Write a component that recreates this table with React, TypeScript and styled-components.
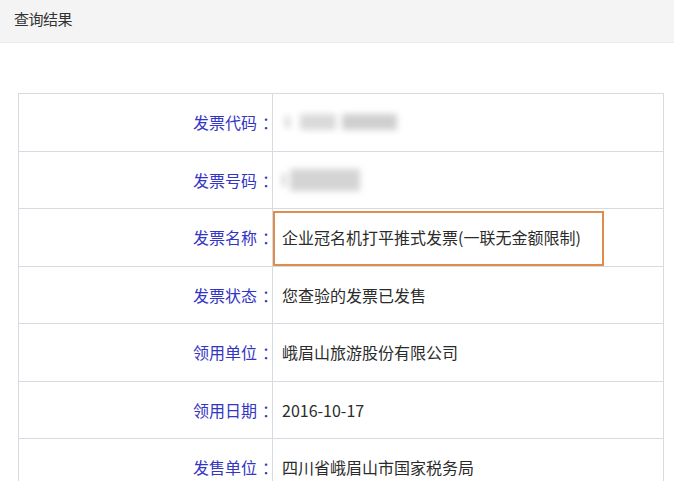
import React from "react";
import styled, { createGlobalStyle } from "styled-components";

const Global = createGlobalStyle`
  html, body { margin: 0; padding: 0; background: #fff; }
  body { font-family: "Noto Sans CJK SC", "Noto Sans", "Liberation Sans", sans-serif; }
`;

const Page = styled.div`
  width: 674px;
  height: 481px;
  overflow: hidden;
  background: #fff;
`;

const Header = styled.div`
  height: 43px;
  box-sizing: border-box;
  background: #f3f4f3;
  border-bottom: 1px solid #eceeed;
  display: flex;
  align-items: center;
  padding-left: 14px;
  padding-bottom: 5px;
  font-size: 15px;
  color: #333;
  letter-spacing: -0.5px;
`;

const TableWrap = styled.div`
  margin: 50px 0 0 18px;
  width: 645px;
  border-top: 1px solid #d6dbe2;
  border-left: 1px solid #d6dbe2;
`;

const Row = styled.div`
  display: grid;
  grid-template-columns: 254px 1fr;
  height: 57.5px;
  box-sizing: border-box;
  border-bottom: 1px solid #d6dbe2;
`;

const Label = styled.div`
  display: flex;
  align-items: center;
  justify-content: flex-end;
  border-right: 1px solid #d6dbe2;
  color: #3535c4;
  font-size: 16px;
`;

const Colon = styled.span`
  display: inline-block;
  width: 15px;
  box-sizing: border-box;
  padding-left: 5px;
  text-align: left;
  white-space: nowrap;
`;

const Value = styled.div`
  position: relative;
  display: flex;
  align-items: center;
  padding-left: 9px;
  border-right: 1px solid #d6dbe2;
  color: #2b2b2b;
  font-size: 16px;
`;

const Highlight = styled.div`
  position: absolute;
  left: 0;
  top: 2px;
  width: 331px;
  height: 55px;
  box-sizing: border-box;
  border: 2px solid #e08c4c;
`;

const Blur = styled.span<{ $w: number; $c: string; $ml?: number; $h?: number }>`
  display: inline-block;
  width: ${(p) => p.$w}px;
  height: ${(p) => p.$h ?? 16}px;
  margin-left: ${(p) => p.$ml ?? 0}px;
  background: ${(p) => p.$c};
  filter: blur(3px);
`;

const rows: { label: string; value: React.ReactNode; highlight?: boolean }[] = [
  {
    label: "发票代码",
    value: (
      <>
        <Blur $w={5} $c="#d9d9d9" $ml={3} $h={12} />
        <Blur $w={36} $c="#dadada" $ml={10} />
        <Blur $w={55} $c="#cfcfcf" $ml={6} />
      </>
    ),
  },
  {
    label: "发票号码",
    value: (
      <>
        <Blur $w={4} $c="#d0d0d0" $ml={0} $h={12} />
        <Blur $w={70} $c="#d4d4d4" $ml={4} $h={22} />
      </>
    ),
  },
  { label: "发票名称", value: "企业冠名机打平推式发票(一联无金额限制)", highlight: true },
  { label: "发票状态", value: "您查验的发票已发售" },
  { label: "领用单位", value: "峨眉山旅游股份有限公司" },
  { label: "领用日期", value: "2016-10-17" },
  { label: "发售单位", value: "四川省峨眉山市国家税务局" },
];

export default function App() {
  return (
    <Page>
      <Global />
      <Header>查询结果</Header>
      <TableWrap>
        {rows.map((r) => (
          <Row key={r.label}>
            <Label>
              {r.label}
              <Colon>：</Colon>
            </Label>
            <Value>
              {r.value}
              {r.highlight && <Highlight />}
            </Value>
          </Row>
        ))}
      </TableWrap>
    </Page>
  );
}
